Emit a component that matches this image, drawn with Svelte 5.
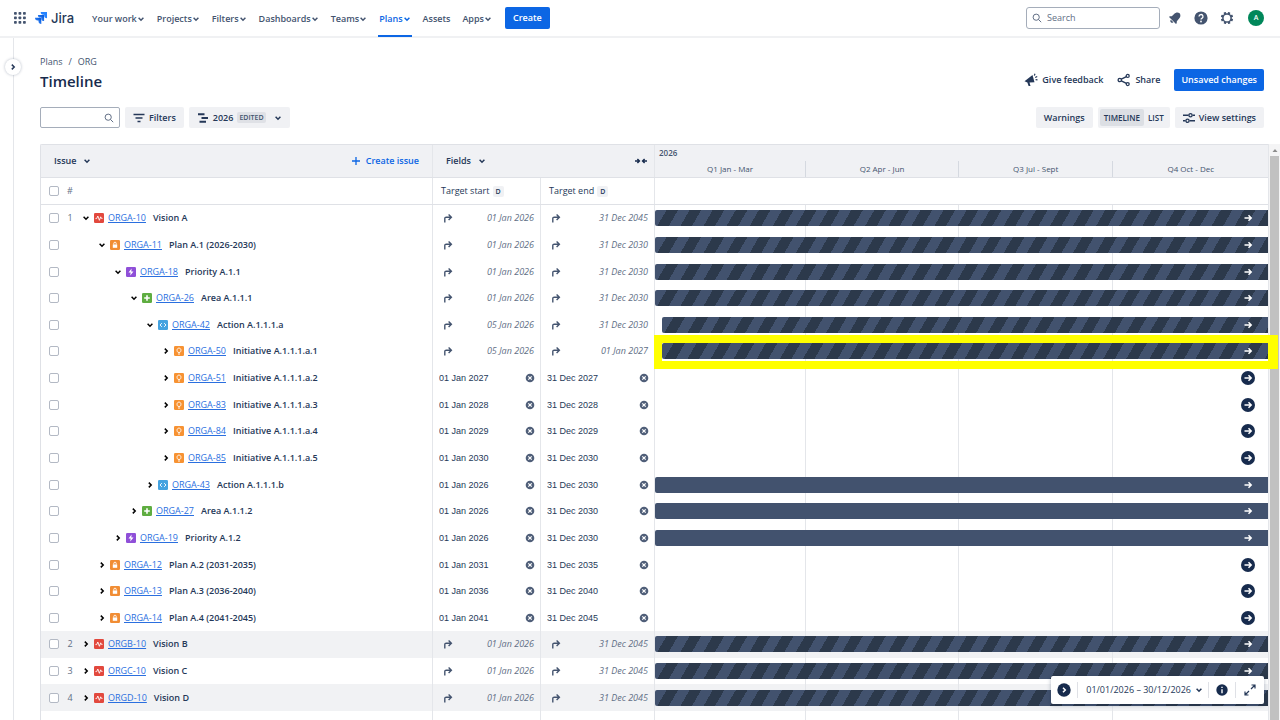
<script>
  const navItems = [
    { label: 'Your work', menu: true },
    { label: 'Projects', menu: true },
    { label: 'Filters', menu: true },
    { label: 'Dashboards', menu: true },
    { label: 'Teams', menu: true },
    { label: 'Plans', menu: true, active: true },
    { label: 'Assets', menu: false },
    { label: 'Apps', menu: true }
  ];

  const quarters = ['Q1 Jan - Mar', 'Q2 Apr - Jun', 'Q3 Jul - Sept', 'Q4 Oct - Dec'];

  // bar: striped = rolled-up dates, solid = own dates, none = starts after the visible range
  // offset is the start day of the year
  let rows = $state([
    { num: 1, depth: 0, open: true, type: 'vision', key: 'ORGA-10', title: 'Vision A', start: '01 Jan 2026', end: '31 Dec 2045', bar: 'striped' },
    { depth: 1, open: true, type: 'plan', key: 'ORGA-11', title: 'Plan A.1 (2026-2030)', start: '01 Jan 2026', end: '31 Dec 2030', bar: 'striped' },
    { depth: 2, open: true, type: 'priority', key: 'ORGA-18', title: 'Priority A.1.1', start: '01 Jan 2026', end: '31 Dec 2030', bar: 'striped' },
    { depth: 3, open: true, type: 'area', key: 'ORGA-26', title: 'Area A.1.1.1', start: '01 Jan 2026', end: '31 Dec 2030', bar: 'striped' },
    { depth: 4, open: true, type: 'action', key: 'ORGA-42', title: 'Action A.1.1.1.a', start: '05 Jan 2026', end: '31 Dec 2030', bar: 'striped', offset: 4 },
    { depth: 5, type: 'initiative', key: 'ORGA-50', title: 'Initiative A.1.1.1.a.1', start: '05 Jan 2026', end: '01 Jan 2027', bar: 'striped', offset: 4, marked: true },
    { depth: 5, type: 'initiative', key: 'ORGA-51', title: 'Initiative A.1.1.1.a.2', start: '01 Jan 2027', end: '31 Dec 2027', bar: 'none' },
    { depth: 5, type: 'initiative', key: 'ORGA-83', title: 'Initiative A.1.1.1.a.3', start: '01 Jan 2028', end: '31 Dec 2028', bar: 'none' },
    { depth: 5, type: 'initiative', key: 'ORGA-84', title: 'Initiative A.1.1.1.a.4', start: '01 Jan 2029', end: '31 Dec 2029', bar: 'none' },
    { depth: 5, type: 'initiative', key: 'ORGA-85', title: 'Initiative A.1.1.1.a.5', start: '01 Jan 2030', end: '31 Dec 2030', bar: 'none' },
    { depth: 4, type: 'action', key: 'ORGA-43', title: 'Action A.1.1.1.b', start: '01 Jan 2026', end: '31 Dec 2030', bar: 'solid' },
    { depth: 3, type: 'area', key: 'ORGA-27', title: 'Area A.1.1.2', start: '01 Jan 2026', end: '31 Dec 2030', bar: 'solid' },
    { depth: 2, type: 'priority', key: 'ORGA-19', title: 'Priority A.1.2', start: '01 Jan 2026', end: '31 Dec 2030', bar: 'solid' },
    { depth: 1, type: 'plan', key: 'ORGA-12', title: 'Plan A.2 (2031-2035)', start: '01 Jan 2031', end: '31 Dec 2035', bar: 'none' },
    { depth: 1, type: 'plan', key: 'ORGA-13', title: 'Plan A.3 (2036-2040)', start: '01 Jan 2036', end: '31 Dec 2040', bar: 'none' },
    { depth: 1, type: 'plan', key: 'ORGA-14', title: 'Plan A.4 (2041-2045)', start: '01 Jan 2041', end: '31 Dec 2045', bar: 'none' },
    { num: 2, depth: 0, type: 'vision', key: 'ORGB-10', title: 'Vision B', start: '01 Jan 2026', end: '31 Dec 2045', bar: 'striped', shaded: true },
    { num: 3, depth: 0, type: 'vision', key: 'ORGC-10', title: 'Vision C', start: '01 Jan 2026', end: '31 Dec 2045', bar: 'striped' },
    { num: 4, depth: 0, type: 'vision', key: 'ORGD-10', title: 'Vision D', start: '01 Jan 2026', end: '31 Dec 2045', bar: 'striped', shaded: true }
  ]);

  let view = $state('timeline');
</script>

{#snippet chevron(dir = 'down')}
  <svg class="chevron" class:right={dir === 'right'} viewBox="0 0 8 8" aria-hidden="true">
    <path d="M1.6 2.8 4 5.2 6.4 2.8" />
  </svg>
{/snippet}

{#snippet magnifier()}
  <svg class="magnifier" viewBox="0 0 10 10" aria-hidden="true">
    <circle cx="4.2" cy="4.2" r="3.1" /><path d="M6.5 6.5 9.2 9.2" />
  </svg>
{/snippet}

{#snippet typeIcon(type)}
  <svg class="type {type}" viewBox="0 0 10 10" aria-hidden="true">
    <rect width="10" height="10" rx="1.3" />
    {#if type === 'vision'}
      <path class="line" d="M1.5 5.6h1.2L3.8 3l1.6 4.3L6.7 3.8l.7 1.6h1.1" />
    {:else if type === 'plan'}
      <path class="fill" d="M2.8 4.5h4.4v3.3H2.8z" /><path class="line" d="M3.8 4.6V3.4a1.2 1.2 0 0 1 2.4 0v1.2" />
    {:else if type === 'priority'}
      <path class="fill" d="M5.6 1.6 2.5 5.5h2.1l-.3 2.9 3.2-3.9H5.3z" />
    {:else if type === 'area'}
      <path class="thick" d="M5 2.2v5.6M2.2 5h5.6" />
    {:else if type === 'action'}
      <path class="line" d="M3.9 3.1 2 5l1.9 1.9M6.1 3.1 8 5 6.1 6.9" />
    {:else}
      <path class="line" d="M4 6.4C2.6 5.2 2.6 2.2 5 2.1c2.4.1 2.4 3.1 1 4.3zM4 8h2" />
    {/if}
  </svg>
{/snippet}

{#snippet dateCell(row, value, label)}
  {#if row.bar === 'striped'}
    <div class="rolled">
      <svg viewBox="0 0 10 10" aria-hidden="true"><path d="M1.8 9.6V5.6a1.4 1.4 0 0 1 1.4-1.4H8M5.6 1.4 8.4 4.2 5.6 7" /></svg>
      <span>{value}</span>
    </div>
  {:else}
    <div class="own">
      <input type="text" aria-label="{label} of {row.key}" {value} />
      <button aria-label="Clear {label} of {row.key}">
        <svg viewBox="0 0 10 10" aria-hidden="true"><circle cx="5" cy="5" r="4.3" /><path d="M3.3 3.3 6.7 6.7M6.7 3.3 3.3 6.7" /></svg>
      </button>
    </div>
  {/if}
{/snippet}

<div class="page">
  <header class="topbar">
    <button class="plain" aria-label="Switch to">
      <svg class="switcher" viewBox="0 0 12 12" aria-hidden="true">
        {#each [0, 1, 2] as r}
          {#each [0, 1, 2] as c}
            <rect x={c * 4.5} y={r * 4.5} width="2.8" height="2.8" rx="0.7" />
          {/each}
        {/each}
      </svg>
    </button>
    <a class="logo" href="#home">
      <svg viewBox="0 0 12 12" aria-hidden="true">
        <defs>
          <linearGradient id="fade" x1="1" y1="0" x2="0" y2="1">
            <stop offset="0.2" stop-color="#0c5fe0" /><stop offset="1" stop-color="#4c9aff" />
          </linearGradient>
        </defs>
        <path fill="#2684ff" d="M5.7 0H12v6.2A2.8 2.8 0 0 1 9.2 3.5V2.7h-.9A2.7 2.7 0 0 1 5.7 0z" />
        <path fill="url(#fade)" d="M2.9 2.9h6.2v6.2a2.8 2.8 0 0 1-2.8-2.7v-.8h-.8a2.7 2.7 0 0 1-2.6-2.7z" />
        <path fill="url(#fade)" d="M0 5.8h6.3V12a2.8 2.8 0 0 1-2.8-2.7v-.8h-.9A2.7 2.7 0 0 1 0 5.8z" />
      </svg>
      <span>Jira</span>
    </a>
    <nav>
      {#each navItems as item}
        <a href="#{item.label}" class:active={item.active}>
          {item.label}
          {#if item.menu}{@render chevron()}{/if}
        </a>
      {/each}
    </nav>
    <button class="primary create">Create</button>
    <label class="search">
      {@render magnifier()}
      <input type="text" placeholder="Search" aria-label="Search" />
    </label>
    <div class="tools">
      <button class="plain" aria-label="Notifications">
        <svg viewBox="0 0 14 14" aria-hidden="true">
          <g fill="#44546f" transform="rotate(45 7 7)">
            <path d="M7 .4c2.4.5 3.3 2.2 3.4 4.4l.2 3.2 1.3 1.5v1H2.1v-1L3.4 8l.2-3.2C3.7 2.6 4.6.9 7 .4z" />
            <path d="M5.2 11.1h3.6a1.8 1.8 0 0 1-3.6 0z" />
          </g>
        </svg>
      </button>
      <button class="plain" aria-label="Help">
        <svg viewBox="0 0 14 14" aria-hidden="true">
          <circle cx="7" cy="7" r="6.6" fill="#44546f" />
          <path d="M5 5.5a2 2 0 1 1 2.9 1.8c-.6.3-.9.6-.9 1.3" fill="none" stroke="#fff" stroke-width="1.3" />
          <circle cx="7" cy="10.5" r="0.9" fill="#fff" />
        </svg>
      </button>
      <button class="plain" aria-label="Settings">
        <svg viewBox="0 0 14 14" aria-hidden="true">
          <circle cx="7" cy="7" r="4.1" fill="none" stroke="#44546f" stroke-width="1.5" />
          {#each [0, 45, 90, 135, 180, 225, 270, 315] as angle}
            <rect x="5.8" y="0.8" width="2.4" height="2.2" rx="0.5" fill="#44546f" transform="rotate({angle + 22} 7 7)" />
          {/each}
        </svg>
      </button>
      <button class="avatar" aria-label="Your profile">A</button>
    </div>
  </header>

  <div class="body">
    <aside>
      <button class="expand" aria-label="Expand sidebar">{@render chevron('right')}</button>
    </aside>

    <main>
      <div class="heading">
        <div>
          <div class="crumbs"><a href="#plans">Plans</a><span>/</span><a href="#org">ORG</a></div>
          <h1>Timeline</h1>
        </div>
        <div class="actions">
          <button class="plain">
            <svg viewBox="0 0 14 14" aria-hidden="true">
              <path fill="#253858" d="M.5 8.3 8.5 2l2 7.3-5 .1 1 3.5H4.6L3.4 9.5z" />
              <path d="M10.3 2.6 11 .8M11.2 4.6l2-1.2M11.6 6.6l1.9.2" fill="none" stroke="#253858" stroke-width="1.2" />
            </svg>
            Give feedback
          </button>
          <button class="plain">
            <svg viewBox="0 0 14 14" aria-hidden="true">
              <g fill="none" stroke="#253858" stroke-width="1.3">
                <circle cx="2.8" cy="7" r="1.7" /><circle cx="10.7" cy="2.9" r="1.5" /><circle cx="10.7" cy="11.1" r="1.5" />
                <path d="M4.3 6.2 9.4 3.6M4.3 7.8l5.1 2.6" />
              </g>
            </svg>
            Share
          </button>
          <button class="primary">Unsaved changes</button>
        </div>
      </div>

      <div class="toolbar">
        <label class="find">
          <input type="text" aria-label="Search issues" />
          {@render magnifier()}
        </label>
        <button class="soft">
          <svg viewBox="0 0 12 12" aria-hidden="true"><path d="M.5 2.5h11M2.5 6h7M4.5 9.5h3" fill="none" stroke="#253858" stroke-width="1.5" /></svg>
          Filters
        </button>
        <button class="soft">
          <svg viewBox="0 0 12 12" aria-hidden="true"><path d="M1 2.3h6.5M4.5 6H11M2.5 9.7H9" fill="none" stroke="#253858" stroke-width="2" /></svg>
          2026 <span class="edited">EDITED</span>
          {@render chevron()}
        </button>
        <div class="spacer"></div>
        <button class="soft">Warnings</button>
        <div class="switch">
          <button class:on={view === 'timeline'} onclick={() => (view = 'timeline')}>TIMELINE</button>
          <button class:on={view === 'list'} onclick={() => (view = 'list')}>LIST</button>
        </div>
        <button class="soft">
          <svg viewBox="0 0 12 12" aria-hidden="true">
            <path d="M0 3.2h5.5M9.5 3.2H12M0 8.8h2.5M6.5 8.8H12" fill="none" stroke="#253858" stroke-width="1.5" />
            <circle cx="7.5" cy="3.2" r="1.6" fill="none" stroke="#253858" stroke-width="1.3" />
            <circle cx="4.5" cy="8.8" r="1.6" fill="none" stroke="#253858" stroke-width="1.3" />
          </svg>
          View settings
        </button>
      </div>

      <div class="board">
        <table>
          <thead>
            <tr class="groups">
              <th class="issue-group">
                <button class="plain">Issue {@render chevron()}</button>
                <button class="plain add">
                  <svg viewBox="0 0 10 10" aria-hidden="true"><path d="M5 1v8M1 5h8" /></svg>
                  Create issue
                </button>
              </th>
              <th class="fields-group">
                <button class="plain">Fields {@render chevron()}</button>
                <button class="plain collapse" aria-label="Collapse fields">
                  <svg viewBox="0 0 12 8" aria-hidden="true"><path d="M0 4h4.3M2.4 2 4.4 4 2.4 6M12 4H7.7M9.6 2 7.6 4l2 2" /></svg>
                </button>
              </th>
              <th class="scale">
                <span class="year">2026</span>
                <div class="quarters">
                  {#each quarters as q}<span>{q}</span>{/each}
                </div>
              </th>
            </tr>
            <tr class="fields">
              <th class="issue"><input type="checkbox" aria-label="Select all issues" /><span class="num">#</span></th>
              <th class="field">Target start <span class="tag">D</span></th>
              <th class="field">Target end <span class="tag">D</span></th>
              <th></th>
            </tr>
          </thead>
          <tbody>
            {#each rows as row}
              <tr class:shaded={row.shaded}>
                <td class="issue">
                  <input type="checkbox" aria-label="Select {row.key}" />
                  <span class="num">{row.num ?? ''}</span>
                  <div class="tree" style="padding-left: {row.depth * 16}px">
                    <button class="plain toggle" aria-label="Toggle {row.key}" onclick={() => (row.open = !row.open)}>
                      {@render chevron(row.open ? 'down' : 'right')}
                    </button>
                    {@render typeIcon(row.type)}
                    <a href="#{row.key}">{row.key}</a>
                    <span class="title">{row.title}</span>
                  </div>
                </td>
                <td>{@render dateCell(row, row.start, 'Target start')}</td>
                <td>{@render dateCell(row, row.end, 'Target end')}</td>
                <td class="track" class:marked={row.marked}>
                  {#each quarters as _}<i></i>{/each}
                  {#if row.bar !== 'none'}
                    <div class="bar {row.bar}" style="margin-left: {((row.offset ?? 0) / 365) * 100}%"></div>
                  {/if}
                  <button class="jump" class:off={row.bar === 'none'} aria-label="Scroll to end of {row.key}">
                    <svg viewBox="0 0 14 14" aria-hidden="true"><path d="M3.5 7h6.5M7.5 4.3 10.2 7 7.5 9.7" /></svg>
                  </button>
                </td>
              </tr>
            {/each}
            <tr class="rest">
              <td></td><td></td><td></td>
              <td class="track">{#each quarters as _}<i></i>{/each}</td>
            </tr>
          </tbody>
        </table>
        <div class="scroll">
          <svg viewBox="0 0 10 12" aria-hidden="true"><path d="M2.5 8 5 5l2.5 3z" fill="#8c8c8c" /></svg>
          <div class="thumb"></div>
        </div>
      </div>

      <div class="floating">
        <button class="plain" aria-label="Go to today">
          <svg viewBox="0 0 14 14" aria-hidden="true"><circle cx="7" cy="7" r="6.7" fill="#172b4d" /><path d="M6 4.7 8.3 7 6 9.3" fill="none" stroke="#fff" stroke-width="1.5" /></svg>
        </button>
        <button class="plain range">01/01/2026 – 30/12/2026 {@render chevron()}</button>
        <button class="plain legend" aria-label="Legend">
          <svg class="small" viewBox="0 0 12 12" aria-hidden="true"><circle cx="6" cy="6" r="5.7" fill="#172b4d" /><path d="M6 5.2v4M6 2.7v1.4" stroke="#fff" stroke-width="1.4" /></svg>
        </button>
        <button class="plain" aria-label="Full screen">
          <svg class="small" viewBox="0 0 12 12" aria-hidden="true"><path d="M7 5 11 1M7.5 1H11v3.5M5 7 1 11M4.5 11H1V7.5" fill="none" stroke="#253858" stroke-width="1.2" /></svg>
        </button>
      </div>
    </main>
  </div>
</div>

<style>
  :global(body) {
    background: #fff;
  }

  .page {
    display: flex;
    flex-direction: column;
    min-height: 100vh;
    font-family: 'Open Sans', 'Noto Sans', sans-serif;
    font-size: 9px;
    line-height: 12px;
    color: #253858;
  }

  .page * {
    box-sizing: border-box;
  }

  button,
  input {
    font: inherit;
    color: inherit;
    margin: 0;
    padding: 0;
    border: 0;
    background: none;
  }

  input {
    min-width: 0;
    outline: none;
  }

  button {
    display: flex;
    align-items: center;
    font-weight: 600;
    white-space: nowrap;
    cursor: pointer;
  }

  svg {
    display: block;
    flex: none;
  }

  a {
    color: inherit;
    text-decoration: none;
  }

  .chevron {
    width: 8px;
    height: 8px;
    fill: none;
    stroke: currentColor;
    stroke-width: 1.5;
  }

  .chevron.right {
    transform: rotate(-90deg);
  }

  .magnifier {
    width: 10px;
    height: 10px;
    fill: none;
    stroke: #626f86;
    stroke-width: 1;
  }

  .primary {
    height: 22px;
    padding: 0 7px;
    border-radius: 2px;
    background: #0c66e4;
    color: #fff;
  }

  /* Top navigation */
  .topbar {
    display: flex;
    align-items: center;
    height: 38px;
    padding: 0 16px 0 14px;
    border-bottom: 2px solid #f0f1f3;
  }

  .switcher {
    width: 12px;
    height: 12px;
    fill: #44546f;
  }

  .logo {
    display: flex;
    align-items: center;
    gap: 4px;
    margin-left: 9px;
    font-family: Inter, sans-serif;
    font-size: 13px;
    line-height: 20px;
    color: #253858;
    font-weight: 500;
  }

  .logo svg {
    width: 12px;
    height: 12px;
  }

  nav {
    display: flex;
    align-self: stretch;
    gap: 10px;
    margin: 0 12px 0 17px;
  }

  nav a {
    display: flex;
    align-items: center;
    height: 37px;
    padding: 0 1px;
    border-bottom: 2px solid transparent;
    border-top: 2px solid transparent;
    color: #44546f;
    font-weight: 600;
    white-space: nowrap;
  }

  nav a.active {
    color: #0c66e4;
    border-bottom-color: #0c66e4;
  }

  .create {
    padding: 0 8px;
  }

  .search {
    display: flex;
    align-items: center;
    gap: 5px;
    width: 134px;
    height: 22px;
    margin-left: auto;
    padding: 0 5px;
    border: 1px solid #a5adba;
    border-radius: 3px;
  }

  .search input {
    flex: 1;
  }

  .search input::placeholder {
    color: #626f86;
  }

  .tools {
    display: flex;
    align-items: center;
    gap: 12px;
    margin-left: 8px;
  }

  .tools svg {
    width: 14px;
    height: 14px;
  }

  .avatar {
    justify-content: center;
    width: 16px;
    height: 16px;
    margin-left: 2px;
    border-radius: 50%;
    background: #00875a;
    color: #fff;
    font-size: 7px;
  }

  /* Page body */
  .body {
    display: flex;
    flex: 1;
  }

  aside {
    position: relative;
    width: 14px;
    border-right: 1px solid #e4e6ea;
  }

  .expand {
    position: absolute;
    top: 21px;
    left: 5px;
    justify-content: center;
    width: 16px;
    height: 16px;
    border-radius: 50%;
    background: #fff;
    box-shadow: 0 0 3px rgba(9, 30, 66, 0.3);
  }

  main {
    position: relative;
    display: flex;
    flex-direction: column;
    flex: 1;
    min-width: 0;
    padding: 16px 0 0 26px;
  }

  .heading {
    display: flex;
    justify-content: space-between;
    align-items: flex-end;
    padding-right: 16px;
  }

  .crumbs {
    display: flex;
    gap: 6px;
    line-height: 16px;
    color: #44546f;
  }

  h1 {
    margin: 0;
    font-size: 15px;
    line-height: 22px;
    font-weight: 600;
    color: #172b4d;
  }

  .actions {
    display: flex;
    gap: 14px;
    padding-bottom: 1px;
  }

  .actions .plain {
    gap: 4px;
  }

  .actions svg {
    width: 14px;
    height: 14px;
  }

  .toolbar {
    display: flex;
    gap: 5px;
    margin: 15px 16px 16px 0;
    height: 21px;
  }

  .find {
    display: flex;
    align-items: center;
    width: 80px;
    padding: 0 5px;
    border: 1px solid #a5adba;
    border-radius: 2px;
  }

  .find input {
    flex: 1;
  }

  .soft {
    gap: 4px;
    padding: 0 8px;
    border-radius: 2px;
    background: #f0f1f4;
  }

  .soft svg:not(.chevron) {
    width: 12px;
    height: 12px;
  }

  .edited {
    margin-right: 4px;
    padding: 0 2px;
    border-radius: 2px;
    background: #dfe1e6;
    font-size: 7px;
    line-height: 11px;
    color: #44546f;
  }

  .spacer {
    flex: 1;
  }

  .switch {
    display: flex;
    padding: 2px;
    border-radius: 2px;
    background: #f0f1f4;
  }

  .switch button {
    padding: 0 4px;
    border-radius: 2px;
    font-size: 8px;
  }

  .switch .on {
    background: #dcdfe4;
  }

  /* Plan grid */
  .board {
    display: flex;
    flex: 1;
  }

  table {
    display: flex;
    flex-direction: column;
    flex: 1;
    border-top: 1px solid #dfe1e6;
    border-left: 1px solid #dfe1e6;
    border-radius: 2px 0 0 0;
  }

  thead {
    display: block;
  }

  tbody {
    display: grid;
    flex: 1;
    grid-template-rows: repeat(19, minmax(26px, 1fr)) 9px;
  }

  tr {
    display: grid;
    grid-template-columns: 391px 108px 114px 1fr;
  }

  th,
  td {
    min-width: 0;
    padding: 0;
    text-align: left;
    font-weight: 400;
    border-left: 1px solid #e4e6ea;
  }

  th:first-child,
  td:first-child {
    border-left: 0;
  }

  .groups {
    grid-template-columns: 391px 222px 1fr;
    height: 33px;
    background: #f0f1f4;
    border-bottom: 1px solid #dfe1e6;
  }

  .issue-group,
  .fields-group {
    display: flex;
    justify-content: space-between;
    align-items: center;
    padding: 0 13px;
  }

  .issue-group .plain,
  .fields-group .plain {
    gap: 7px;
  }

  .fields-group {
    padding-right: 7px;
  }

  .issue-group .add {
    gap: 5px;
    color: #0c66e4;
  }

  .add svg,
  .own svg,
  .rolled svg {
    width: 10px;
    height: 10px;
  }

  .add path {
    fill: none;
    stroke: #0c66e4;
    stroke-width: 1.3;
  }

  .collapse svg {
    width: 12px;
    height: 8px;
  }

  .collapse path {
    fill: none;
    stroke: #172b4d;
    stroke-width: 1.5;
  }

  .scale {
    display: flex;
    flex-direction: column;
    justify-content: space-between;
    font-size: 8px;
    color: #44546f;
  }

  .year {
    padding: 2px 4px 0;
    font-weight: 600;
  }

  .quarters,
  .track {
    display: grid;
    grid-template-columns: 90fr 91fr 92fr 92fr;
  }

  .quarters span {
    text-align: center;
    line-height: 16px;
    border-right: 1px solid #d5d9e0;
  }

  .quarters span:last-child,
  .track i:nth-of-type(4) {
    border-right: 0;
  }

  .fields {
    height: 27px;
    border-bottom: 1px solid #dfe1e6;
  }

  .field {
    display: flex;
    align-items: center;
    gap: 3px;
    padding-left: 8px;
  }

  .tag {
    padding: 0 3px;
    border-radius: 2px;
    background: #f0f1f4;
    font-size: 7px;
    line-height: 11px;
    font-weight: 600;
  }

  .issue {
    display: flex;
    align-items: center;
    padding-left: 8px;
    white-space: nowrap;
  }

  input[type='checkbox'] {
    appearance: none;
    width: 10px;
    height: 10px;
    border: 1px solid #b3b9c4;
    border-radius: 2px;
    background: #fff;
  }

  .num {
    width: 22px;
    text-align: center;
    color: #626f86;
  }

  .tree {
    display: flex;
    align-items: center;
  }

  .toggle {
    justify-content: center;
    width: 9px;
    margin-right: 4px;
    color: #000;
  }

  .tree a {
    margin: 0 7px 0 4px;
    color: #2a6fdf;
    text-decoration: underline;
  }

  .title {
    font-weight: 600;
  }

  .type {
    width: 10px;
    height: 10px;
  }

  .type .line {
    fill: none;
    stroke: #fff;
    stroke-width: 0.9;
  }

  .type .thick {
    stroke: #fff;
    stroke-width: 1.6;
  }

  .type .fill {
    fill: #fff;
  }

  .vision rect { fill: #e2483d; }
  .plan rect { fill: #f18d34; }
  .priority rect { fill: #8f4fd8; }
  .area rect { fill: #5fad41; }
  .action rect { fill: #45a3e0; }
  .initiative rect { fill: #f79232; }

  .rolled,
  .own {
    display: flex;
    align-items: center;
    justify-content: space-between;
    height: 100%;
    padding: 0 6px 0 10px;
  }

  .rolled {
    font-style: italic;
    color: #626f86;
  }

  .rolled path {
    fill: none;
    stroke: #44546f;
    stroke-width: 1.4;
  }

  .own {
    padding: 0 5px 0 6px;
    font-family: 'Liberation Sans', Arial, sans-serif;
  }

  .own input {
    flex: 1;
  }

  .own circle {
    fill: #505f79;
  }

  .own path {
    stroke: #fff;
    stroke-width: 1.2;
  }

  .shaded {
    background: #f1f2f4;
  }

  /* Gridlines, bar and jump button share one grid row */
  .track {
    position: relative;
    align-items: center;
  }

  .track i {
    grid-row: 1;
    height: 100%;
    border-right: 1px solid #e4e6ea;
  }

  .track i:nth-of-type(1) { grid-column: 1; }
  .track i:nth-of-type(2) { grid-column: 2; }
  .track i:nth-of-type(3) { grid-column: 3; }
  .track i:nth-of-type(4) { grid-column: 4; }

  .bar {
    grid-area: 1 / 1 / 2 / -1;
    height: 16px;
    border-radius: 2px 0 0 2px;
    background: #42526e;
  }

  .striped {
    background: repeating-linear-gradient(120deg, #42526e 0 10px, #2c394b 10px 20px);
  }

  .jump {
    grid-area: 1 / 4 / 2 / 5;
    justify-self: end;
    margin-right: 13px;
    border-radius: 50%;
  }

  .jump svg {
    width: 14px;
    height: 14px;
  }

  .jump path {
    fill: none;
    stroke: #fff;
    stroke-width: 1.5;
  }

  .off {
    background: #172b4d;
  }

  .marked::after {
    content: '';
    position: absolute;
    inset: -3px -10px -4px -1px;
    border: 8px solid #ff0;
    border-right-width: 10px;
    z-index: 1;
  }

  .scroll {
    display: flex;
    flex-direction: column;
    align-items: center;
    width: 12px;
    border-left: 1px solid #e4e6ea;
    background: #f4f4f5;
  }

  .scroll svg {
    width: 10px;
    height: 12px;
  }

  .thumb {
    flex: 1;
    width: 9px;
    background: #c1c1c1;
  }

  .floating {
    position: absolute;
    right: 16px;
    bottom: 16px;
    z-index: 2;
    display: flex;
    align-items: center;
    height: 28px;
    border-radius: 2px;
    background: #fff;
    box-shadow: 0 1px 4px rgba(9, 30, 66, 0.3);
  }

  .floating button {
    height: 16px;
    padding: 0 8px;
    border-left: 1px solid #dfe1e6;
  }

  .floating button:first-child {
    padding: 0 6px;
    border-left: 0;
  }

  .floating .range {
    gap: 4px;
    padding: 0 5px 0 8px;
    font-weight: 400;
  }

  .floating .legend {
    padding: 0 7px;
  }

  .floating svg:not(.chevron) {
    width: 14px;
    height: 14px;
  }

  .floating svg.small:not(.chevron) {
    width: 12px;
    height: 12px;
  }
</style>
